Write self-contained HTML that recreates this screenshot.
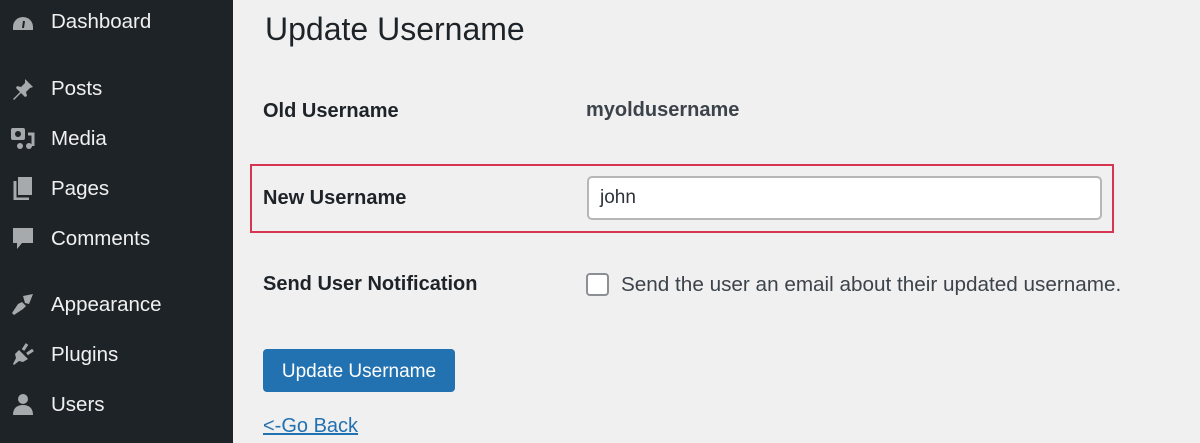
<!DOCTYPE html><html><head><style>
body{margin:0;width:1200px;height:443px;overflow:hidden;background:#f0f0f1;font-family:"Liberation Sans",sans-serif;position:relative}
.sb{position:absolute;left:0;top:0;width:233px;height:443px;background:#1d2327}
.it{position:absolute;left:51px;color:#f0f0f1;font-size:20.5px;line-height:24px}
.ic{position:absolute;left:11px;width:24px;height:24px}
.a{position:absolute;color:#1d2327}
.lb{font-weight:bold;font-size:20px}
</style></head><body>
<div class="sb">
<svg class="ic" style="top:10px" viewBox="0 0 24 24"><path d="M2 17a10 10 0 0 1 20 0v3H2z" fill="#a7aaad"/><path d="M12 18l1-7" stroke="#1d2327" stroke-width="2"/></svg><div class="it" style="top:10px">Dashboard</div>
<svg class="ic" style="top:77px" viewBox="0 0 24 24"><path d="M14 2l8 8-3 1-4 4 1 4-2 1-4-4-7 7-1-1 7-7-4-4 1-2 4 1 4-4z" fill="#a7aaad"/></svg><div class="it" style="top:77px">Posts</div>
<svg class="ic" style="top:126px" viewBox="0 0 24 24"><rect x="0" y="2" width="14" height="12" rx="2" fill="#a7aaad"/><circle cx="7" cy="8" r="3" fill="#1d2327"/><path d="M17 8h5v12" stroke="#a7aaad" stroke-width="3" fill="none"/><circle cx="18" cy="20" r="3" fill="#a7aaad"/><circle cx="9" cy="20" r="3" fill="#a7aaad"/></svg><div class="it" style="top:127px">Media</div>
<svg class="ic" style="top:176px" viewBox="0 0 24 24"><rect x="7" y="1" width="14" height="18" fill="#a7aaad"/><path d="M4 5v18h14" stroke="#a7aaad" stroke-width="3" fill="none"/></svg><div class="it" style="top:177px">Pages</div>
<svg class="ic" style="top:226px" viewBox="0 0 24 24"><path d="M2 2h20v15H11l-5 6v-6H2z" fill="#a7aaad"/></svg><div class="it" style="top:227px">Comments</div>
<svg class="ic" style="top:292px" viewBox="0 0 24 24"><path d="M12 4l10-2-4 10-4-1zM11 10l4 4-3 3-9 6-2-2 6-9z" fill="#a7aaad"/></svg><div class="it" style="top:293px">Appearance</div>
<svg class="ic" style="top:342px" viewBox="0 0 24 24"><path d="M16 2l-4 6M22 8l-6 4" stroke="#a7aaad" stroke-width="3"/><path d="M8 8l9 9-5 3-4-1-5 4-1-1 3-6-1-4z" fill="#a7aaad"/></svg><div class="it" style="top:343px">Plugins</div>
<svg class="ic" style="top:392px" viewBox="0 0 24 24"><circle cx="12" cy="7" r="5" fill="#a7aaad"/><path d="M2 23c0-7 4-10 10-10s10 3 10 10z" fill="#a7aaad"/></svg><div class="it" style="top:393px">Users</div>
</div>
<div class="a" style="left:265px;top:11px;font-size:32px">Update Username</div>
<div class="a lb" style="left:263px;top:100px">Old Username</div>
<div class="a lb" style="left:586px;top:99px;color:#3c434a">myoldusername</div>
<div style="position:absolute;left:250px;top:164px;width:860px;height:65px;border:2px solid #d63651"></div>
<div class="a lb" style="left:263px;top:187px">New Username</div>
<div style="position:absolute;left:587px;top:176px;width:511px;height:40px;background:#fff;border:2px solid #b4b6b8;border-radius:5px"></div>
<div class="a" style="left:600px;top:187px;font-size:19px;color:#2c3338">john</div>
<div class="a lb" style="left:263px;top:273px">Send User Notification</div>
<div style="position:absolute;left:586px;top:273px;width:19px;height:19px;border:2px solid #8c8f94;border-radius:4px;background:#fff"></div>
<div class="a" style="left:621px;top:273px;font-size:20.7px;color:#3c434a">Send the user an email about their updated username.</div>
<div style="position:absolute;left:263px;top:349px;width:192px;height:43px;background:#2271b1;border-radius:4px;color:#fff;font-size:19px;line-height:45px;text-align:center">Update Username</div>
<div class="a" style="left:263px;top:415px;font-size:20px;color:#2271b1;text-decoration:underline">&lt;-Go Back</div>
</body></html>
